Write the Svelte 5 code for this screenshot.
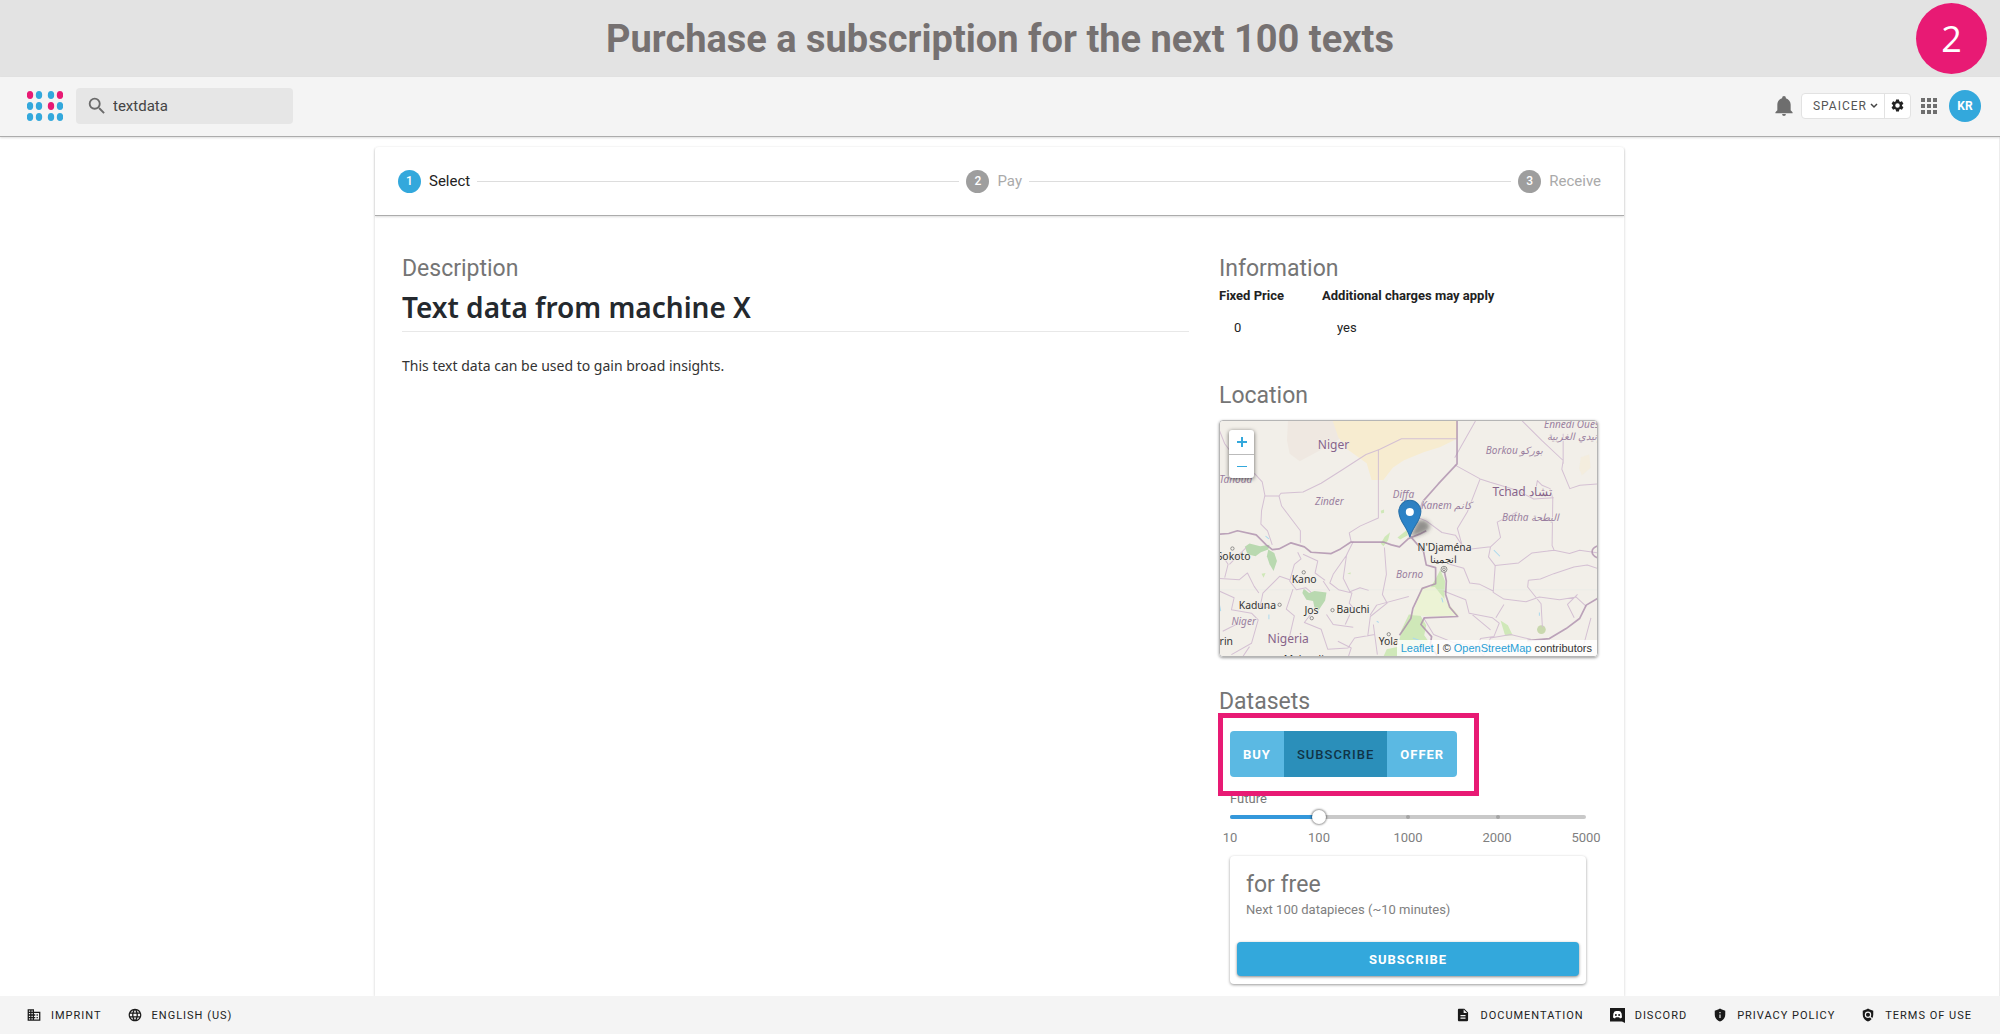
<script>
  const steps = [
    { n: 1, label: 'Select', active: true },
    { n: 2, label: 'Pay', active: false },
    { n: 3, label: 'Receive', active: false }
  ];
  const amounts = [10, 100, 1000, 2000, 5000];
  const modes = ['Buy', 'Subscribe', 'Offer'];
  let mode = $state('Subscribe');
  let level = $state(1);
  let query = $state('textdata');

  const dots = [
    [3, 4, 1], [12, 4, 0], [24, 4, 0], [33, 4, 1],
    [3, 15, 0], [12, 15, 0], [24, 15, 1], [33, 15, 0],
    [3, 26, 0], [12, 26, 0], [24, 26, 0], [33, 26, 0]
  ];
  const cells = [0, 6, 12];
</script>

<div class="page">
  <div class="banner">
    <h1>Purchase a subscription for the next 100 texts</h1>
    <span class="badge">2</span>
  </div>

  <header>
    <a class="logo" href="#home" aria-label="Home">
      <svg width="36" height="30" viewBox="0 0 36 30">
        {#each dots as [x, y, pink]}
          <ellipse cx={x} cy={y} rx="3.2" ry="4" class:pink={pink === 1} />
        {/each}
      </svg>
    </a>
    <label class="search">
      <svg width="22" height="22" viewBox="0 0 24 24"><path fill="#6b6b6b" d="M15.500 14h-.79l-.28-.27A6.471 6.471 0 0 0 16 9.500 6.500 6.500 0 1 0 9.500 16c1.610 0 3.090-.59 4.230-1.570l.27.28v.79l5 4.990L20.490 19l-4.990-5zm-6 0C7.010 14 5 11.990 5 9.500S7.010 5 9.500 5 14 7.010 14 9.500 11.990 14 9.500 14z" /></svg>
      <input type="text" aria-label="Search" bind:value={query} />
    </label>
    <div class="tools">
      <button class="plain" aria-label="Notifications">
        <svg width="18" height="20" viewBox="3 2 18 21"><path fill="#6e6e6e" d="M21,19V20H3V19L5,17V11C5,7.9 7.03,5.17 10,4.29V4A2,2 0 0,1 14,4V4.29C16.97,5.17 19,7.9 19,11V17L21,19M14,21A2,2 0 0,1 10,21" /></svg>
      </button>
      <div class="group">
        <button class="org">SPAICER
          <svg width="8" height="6" viewBox="0 0 8 6"><path d="M1 1l3 3 3-3" fill="none" stroke="#444" stroke-width="1.5" /></svg>
        </button>
        <button class="gear" aria-label="Settings">
          <svg width="15" height="15" viewBox="0 0 24 24"><path fill="#222" d="M19.14 12.94c.04-.3.06-.61.06-.94 0-.32-.02-.64-.07-.94l2.03-1.58c.18-.14.23-.41.12-.61l-1.92-3.32c-.12-.22-.37-.29-.59-.22l-2.39.96c-.5-.38-1.03-.7-1.62-.94l-.36-2.54c-.04-.24-.24-.41-.48-.41h-3.84c-.24 0-.43.17-.47.41l-.36 2.54c-.59.24-1.13.57-1.62.94l-2.39-.96c-.22-.08-.47 0-.59.22L2.74 8.87c-.12.21-.08.47.12.61l2.03 1.58c-.05.3-.09.63-.09.94s.02.64.07.94l-2.03 1.58c-.18.14-.23.41-.12.61l1.92 3.32c.12.22.37.29.59.22l2.39-.96c.5.38 1.03.7 1.62.94l.36 2.54c.05.24.24.41.48.41h3.84c.24 0 .44-.17.47-.41l.36-2.54c.59-.24 1.13-.56 1.62-.94l2.39.96c.22.08.47 0 .59-.22l1.92-3.32c.12-.22.07-.47-.12-.61l-2.01-1.58zM12 15.6a3.6 3.6 0 1 1 0-7.2a3.6 3.6 0 0 1 0 7.2z" /></svg>
        </button>
      </div>
      <button class="plain" aria-label="Apps">
        <svg width="16" height="16" viewBox="0 0 16 16" fill="#6e6e6e">
          {#each cells as y}{#each cells as x}<rect {x} {y} width="4" height="4" />{/each}{/each}
        </svg>
      </button>
      <button class="avatar">KR</button>
    </div>
  </header>

  <main>
    <section class="card">
      <ol class="stepper">
        {#each steps as s, i}
          {#if i > 0}<li class="line" aria-hidden="true"></li>{/if}
          <li class="step" class:active={s.active}><span class="num">{s.n}</span>{s.label}</li>
        {/each}
      </ol>

      <div class="columns">
        <article>
          <h2>Description</h2>
          <h3>Text data from machine X</h3>
          <p>This text data can be used to gain broad insights.</p>
        </article>

        <aside>
          <h2>Information</h2>
          <table>
            <thead><tr><th>Fixed Price</th><th>Additional charges may apply</th></tr></thead>
            <tbody><tr><td>0</td><td>yes</td></tr></tbody>
          </table>

          <h2>Location</h2>
          <div class="map">
            <svg class="tiles" viewBox="30 32 1130 702" preserveAspectRatio="xMidYMid slice" role="img" aria-label="Map around N'Djaména">
              <rect x="20" y="20" width="1160" height="730" fill="#f2efe9" />
              <path fill="#efe8e1" d="M235 30H372L390 85L330 120L270 152L240 130L232 90Z" />
              <path fill="#f7ecd0" d="M368 30H740V85L690 110L640 125L580 150L548 172L520 208H485L470 158L410 115L385 80Z" />
              <path fill="#f5ecd4" d="M1110 140l25-8 4 40-26 22-8-20z" opacity=".5" />
              <g fill="#b9d9b0">
                <path d="M106 408l14-10 32 8 28-4-4 14-22 8-16 12-24-6z" />
                <path d="M176 416l18 10 8 24-10 30-12-20-8-24z" />
                <path d="M282 532l16 14 16-6 36 4-4 24-20 30-12-10-4-18-20-4-12-20z" />
              </g>
              <g fill="#cfe8b8">
                <path d="M512 398l12-20 16-14-6 24-14 18zM562 380l30-24v18l-22 12z" />
                <path d="M512 300l10-4v10l-8 2zM156 488l12-2-6 14zM412 488l10-4v6zM870 628l22 14 14 30-22 2z" />
                <path d="M678 500l12-24 14 34-2 60-30-20-14-16z" />
                <path d="M520 736l10-22 34-8 10-50 22-46 34 2 18 30-6 30 14 20-20 20-30 4-40 20z" />
              </g>
              <path fill="#ecf3d5" d="M634 530l40-2 38 48 34 36-80 4-60-4z" />
              <circle cx="992" cy="655" r="13" fill="#c9d8ae" />
              <g fill="none" stroke="#abd9ee" stroke-width="3">
                <path d="M850 418l18 18M608 680l26 10M178 610v14M694 560l4 14M168 376l10 8M986 604v10M30 580l4 20M500 630l6 4" />
                <path d="M30 536H1160" stroke="#dfe6e6" stroke-width="1" />
              </g>
              <g fill="none" stroke="#d4c0d3" stroke-width="3" stroke-linejoin="round">
                <path d="M30 60l16 40 60 80 30 10 22 24 8 40-10 46-2 40 20 20 14 42" />
                <path d="M166 256h42l6-8 66-4 54-26 60-38 74-48 40-15 66-32h164" />
                <path d="M505 118V322L450 346l-32 20 6 28M208 256l8 30 56 74v36" />
                <path d="M733 163l76 42 30 10 80 24 50 26 60-4M809 205l-38 98-30 50 14 50-20-30-40-8-46-34-24-10M795 32l-62 110M933 30l60 60 64 60-4 26 24 58 30-10 54-4M1057 70v90" />
                <path d="M976 232l4-22 14 14 24 10 8 30-2 140 6 14-20 2M730 420l110-12 30-28-10-46 60-30M840 408l-6 30 20 26 70-8 40-30 66-8 46 10 30-10 54 8" />
                <path d="M854 464l-6 80 32 20 66 8 40-14 60 8 50-8 30 28M848 540l-40-20-30-4-18-44-50-14M953 508l36-4 40-16 60-20 40-6 30 10M953 508l-2 20 40 50 4 70M700 540l66 26 10 40 70 14 20 16-16 40-40 6-10 30M780 606l60 50M640 620l30 50 60 24 60 10 30 30M820 730l20-50 60-10 60 14M880 580l-24 40M1090 620l-20-40 30-30" />
                <path d="M523 410l6 80-12 60 14 26-50 40-8 60M480 612l20-30 96-26M430 392l-20 40-10 70 20 40 30-12 26 8M412 430l-42 60-10 26 26 20 40 10-8 30 20 24M264 424l10 20-20 16-14 50 20 26 28-6 16 14M280 430l44 20-8 36 30 22M240 506l-30-10-20 20-30 30-8 40 30 4M30 502l60 4 24-20 20 40 14 20M30 540l44 20-8 36 60 10 20 20-20 70-60 34M46 500l10-40-20-30M60 460l50-50M310 600l-26 34 50 20 20 60 60-4 20-30 60-10M350 610l20 30 60 8M340 510l20 30M250 534l-20 60 24 20-14 60M384 690l40 20-10 30M80 640l-40 20M100 736l20-30M420 610l-14 30M490 640l12 90M1140 620l-24 90" />
              </g>
              <g fill="none" stroke="#ad8eac" stroke-width="5" stroke-linejoin="round" opacity=".8">
                <path d="M740 30v130l-56 60-46 52-18 54-22 50" />
                <path d="M28 370l30-2 26-8 56 12 30 30 18 14 20-2 36-18 40 12 20 16 60 4 28-14 30-20h100l22 8 24 6 26-24 34-14 20-10" />
                <path d="M600 376l40 46 8 40 28 8v48l-40 14-28 60-6 30-20 30-14 20" />
                <path d="M700 470l8 40-2 40 12 38 24 28-100 4-10 20 32 36-4 24 20 32" />
                <path d="M1160 405c-22 8-22 26 0 36M1160 562l-34 20-20 40-40 30-50 30-66 6" />
              </g>
              <g class="region" font-size="30">
                <text x="30" y="216">Tahoua</text><text x="316" y="283">Zinder</text><text x="548" y="261">Diffa</text>
                <text x="632" y="294">Kanem كانم</text><text x="826" y="131">Borkou بوركو</text>
                <text x="1000" y="54">Ennedi Ouest</text><text x="1010" y="88">إنيدي الغربية</text>
                <text x="874" y="332">Batha البطحة</text><text x="558" y="501">Borno</text><text x="66" y="641">Niger</text>
              </g>
              <g class="country" font-size="36">
                <text x="324" y="116">Niger</text><text x="846" y="256">Tchad تشاد</text><text x="174" y="694">Nigeria</text>
              </g>
              <g class="city" font-size="31">
                <text x="22" y="448">Sokoto</text><text x="246" y="517">Kano</text><text x="88" y="593">Kaduna</text>
                <text x="284" y="610">Jos</text><text x="380" y="606">Bauchi</text><text x="506" y="700">Yola</text>
                <text x="622" y="420">N'Djaména</text><text x="660" y="457">انجمينا</text><text x="12" y="702">orin</text><text x="222" y="754">Makurdi</text>
              </g>
              <g fill="#f2efe9" stroke="#666" stroke-width="2">
                <circle cx="69" cy="413" r="5" /><circle cx="282" cy="484" r="5" /><circle cx="210" cy="581" r="5" />
                <circle cx="306" cy="621" r="5" /><circle cx="368" cy="597" r="5" /><circle cx="536" cy="669" r="5" />
                <circle cx="701" cy="475" r="9" /><circle cx="701" cy="475" r="4" />
              </g>
              <defs>
                <linearGradient id="pin" x1="0" y1="0" x2="0" y2="1"><stop offset="0" stop-color="#2e7fc0" /><stop offset="1" stop-color="#2a87cf" /></linearGradient>
                <filter id="soft" x="-50%" y="-50%" width="200%" height="200%"><feGaussianBlur stdDeviation="6" /></filter>
              </defs>
              <path fill="#333" opacity=".5" filter="url(#soft)" d="M600 378l20-44c14-14 42-2 38 16c-4 14-32 22-58 28z" />
              <path fill="url(#pin)" stroke="#2970a8" stroke-width="3" d="M599 379C592 350 566 330 566 302a33 33 0 0 1 66 0C632 330 606 350 599 379z" />
              <circle cx="599" cy="304" r="12" fill="#fff" />
            </svg>
            <div class="zoom">
              <button aria-label="Zoom in"><svg width="10" height="10" viewBox="0 0 10 10"><path d="M5 0v10M0 5h10" stroke="#33a8dc" stroke-width="2" /></svg></button>
              <button aria-label="Zoom out"><svg width="10" height="10" viewBox="0 0 10 10"><path d="M0 4.500h10" stroke="#33a8dc" stroke-width="1" /></svg></button>
            </div>
            <div class="credit"><a href="#leaflet">Leaflet</a> | © <a href="#osm">OpenStreetMap</a> contributors</div>
          </div>

          <h2>Datasets</h2>
          <div class="datasets">
            <div class="modes">
              {#each modes as m}
                <button class:selected={mode === m} aria-pressed={mode === m} onclick={() => (mode = m)}>{m}</button>
              {/each}
            </div>
            <div class="mark"></div>

            <label class="caption" for="amount">Future</label>
            <div class="slider">
              <div class="rail">
                <span class="fill" style="width: {level * 25}%"></span>
                <i></i><i></i><i></i>
              </div>
              <input id="amount" type="range" min="0" max="4" bind:value={level} />
            </div>
            <div class="labels">
              {#each amounts as a}<span>{a}</span>{/each}
            </div>

            <div class="offer">
              <div class="text">
                <h2>for free</h2>
                <p>Next 100 datapieces (~10 minutes)</p>
              </div>
              <button>Subscribe</button>
            </div>
          </div>
        </aside>
      </div>
    </section>
  </main>

  <footer>
    <a href="#imprint"><svg width="14" height="14" viewBox="1 1 22 22"><path d="M18,15H16V17H18M18,11H16V13H18M20,19H12V17H14V15H12V13H14V11H12V9H20M10,7H8V5H10M10,11H8V9H10M10,15H8V13H10M10,19H8V17H10M6,7H4V5H6M6,11H4V9H6M6,15H4V13H6M6,19H4V17H6M12,7V3H2V21H22V7H12Z" /></svg>Imprint</a>
    <a href="#language"><svg width="14" height="14" viewBox="1 1 22 22"><path d="M11.99 2C6.47 2 2 6.48 2 12s4.47 10 9.99 10C17.52 22 22 17.52 22 12S17.52 2 11.99 2zm6.93 6h-2.95c-.32-1.25-.78-2.45-1.38-3.56 1.84.63 3.37 1.91 4.33 3.56zM12 4.04c.83 1.2 1.48 2.53 1.91 3.96h-3.82c.43-1.43 1.08-2.76 1.91-3.96zM4.26 14C4.1 13.36 4 12.69 4 12s.1-1.36.26-2h3.38c-.08.66-.14 1.32-.14 2 0 .68.06 1.34.14 2H4.26zm.82 2h2.95c.32 1.25.78 2.45 1.38 3.56-1.84-.63-3.37-1.9-4.33-3.56zm2.95-8H5.08c.96-1.66 2.49-2.93 4.33-3.56C8.81 5.55 8.35 6.75 8.03 8zM12 19.96c-.83-1.2-1.48-2.53-1.91-3.96h3.82c-.43 1.43-1.08 2.76-1.91 3.96zM14.34 14H9.66c-.09-.66-.16-1.32-.16-2 0-.68.07-1.35.16-2h4.68c.09.65.16 1.32.16 2 0 .68-.07 1.34-.16 2zm.25 5.56c.6-1.11 1.06-2.31 1.38-3.56h2.95c-.96 1.65-2.49 2.93-4.33 3.56zM16.36 14c.08-.66.14-1.32.14-2 0-.68-.06-1.34-.14-2h3.38c.16.64.26 1.31.26 2s-.1 1.36-.26 2h-3.38z" /></svg>English (US)</a>
    <a class="first-right" href="#docs"><svg width="14" height="14" viewBox="1 1 22 22"><path d="M13,9H18.5L13,3.5V9M6,2H14L20,8V20A2,2 0 0,1 18,22H6C4.89,22 4,21.1 4,20V4C4,2.89 4.89,2 6,2M16,18V16H8V18H16M16,14V12H8V14H16Z" /></svg>Documentation</a>
    <a href="#discord"><svg width="15" height="15" viewBox="0 0 15 15"><path d="M0 0H15V15L12 13.500H0Z" /><path fill="#fff" d="M4.500 3.500L6.200 3h2.600l1.700.5 1.100 2 .4 4-2 1-.8-1.200H5.800L5 10.500l-2-1 .4-4z" /><circle cx="5.900" cy="7" r="1" /><circle cx="9.100" cy="7" r="1" /></svg>Discord</a>
    <a href="#privacy"><svg width="14" height="14" viewBox="0 0 24 24"><path d="M12 1C9 3 6 4 3 4.500V11c0 6 4 10.500 9 12c5-1.500 9-6 9-12V4.500C18 4 15 3 12 1z" /><path fill="#f4f4f4" d="M11 11h2v6h-2zM11 7h2v2h-2z" /></svg>Privacy policy</a>
    <a href="#terms"><svg width="14" height="14" viewBox="0 0 24 24"><path d="M12 1C9 3 6 4 3 4.500V11c0 6 4 10.500 9 12c5-1.500 9-6 9-12V4.500C18 4 15 3 12 1z" /><circle cx="12" cy="11.500" r="4.500" fill="none" stroke="#f4f4f4" stroke-width="2" /><path d="M15 14.500l6 6" stroke="#f4f4f4" stroke-width="2" /></svg>Terms of use</a>
  </footer>
</div>

<style>
  :global(body) { margin: 0; background: #fff; font-family: Roboto, "Liberation Sans", sans-serif; color: #222; }
  .page { min-height: 100vh; display: flex; flex-direction: column; }
  button { font: inherit; border: 0; padding: 0; cursor: pointer; }
  h1, h2, h3, p { margin: 0; }

  .banner { display: grid; grid-template-columns: 84px 1fr 84px; align-items: center; background: #e3e3e3; height: 77px; }
  .banner h1 { grid-column: 2; text-align: center; font-size: 38px; line-height: 44px; font-weight: 700; color: #767171; }
  .badge { width: 71px; height: 71px; border-radius: 50%; background: #e81a74; color: #fff; font: 36px/71px "Open Sans", sans-serif; text-align: center; }

  header { display: flex; align-items: center; box-sizing: border-box; height: 60px; padding: 0 19px 2px 27px; background: #f4f4f4; border-bottom: 1px solid #acacac; box-shadow: 0 1px 2px #0002; z-index: 1; }
  .logo { display: flex; margin-right: 13px; }
  .logo ellipse { fill: #33a8dc; }
  .logo ellipse.pink { fill: #e81a74; }
  .search { display: flex; align-items: center; box-sizing: border-box; width: 217px; height: 36px; padding: 0 10px; gap: 5px; border-radius: 4px; background: #e6e6e6; }
  .search svg { flex: none; }
  .search input { flex: 1; min-width: 0; border: 0; padding: 0; background: none; outline: 0; font: 15px Roboto, sans-serif; color: #444; }
  .tools { display: flex; align-items: center; margin-left: auto; }
  .plain { display: flex; background: none; }
  .group { display: flex; margin: 0 10px 0 8px; height: 24px; border: 1px solid #e2e2e2; border-radius: 4px; background: #fff; }
  .group button { display: flex; align-items: center; justify-content: center; background: none; }
  .group .org { width: 83px; gap: 3px; padding-left: 5px; font-size: 12px; letter-spacing: 1px; color: #555; border-right: 1px solid #e2e2e2; }
  .gear { width: 25px; }
  .avatar { width: 32px; height: 32px; margin-left: 12px; border-radius: 50%; background: #33a8dc; color: #fff; font-size: 12px; font-weight: 700; }

  main { flex: 1; display: flex; border-right: 1px solid #ececec; }
  .card { width: min(1249px, 100%); margin: 10px auto 0; border-radius: 4px 4px 0 0; background: #fff; box-shadow: 0 1px 3px #0003; }
  .stepper { display: flex; align-items: center; gap: 7px; height: 68px; margin: 0; padding: 0 23px; list-style: none; border-bottom: 1px solid #acacac; box-shadow: 0 1px 2px #0002; }
  .step { display: flex; align-items: center; gap: 8px; font-size: 15px; color: #aaa; }
  .step.active { color: #222; }
  .num { width: 23px; height: 23px; border-radius: 50%; background: #9e9e9e; color: #fff; text-align: center; font-size: 12px; line-height: 23px; font-weight: 500; }
  .active .num { background: #33a8dc; }
  .line { flex: 1; height: 1px; background: #ddd; }

  .columns { display: grid; grid-template-columns: 1fr 379px; gap: 30px; padding: 37px 26px 12px 27px; }
  h2 { font-size: 23px; line-height: 32px; font-weight: 400; color: #757575; }
  h3 { padding: 6px 0 8px; border-bottom: 1px solid #e8e8e8; font: 600 28px/32px "Noto Sans", "Open Sans", sans-serif; color: #24292e; }
  article p { margin-top: 24px; font: 14px/20px "Noto Sans", sans-serif; color: #333; }

  table { border-collapse: collapse; margin-bottom: 42px; font-size: 13px; line-height: 20px; text-align: left; }
  th { padding: 1px 38px 0 0; font-weight: 700; }
  td { padding: 12px 15px 0; }

  .map { position: relative; box-sizing: border-box; height: 237px; margin: 8px 0 29px; border: 1px solid #b5b5b5; border-radius: 4px; overflow: hidden; box-shadow: 0 1px 3px #0006; }
  .tiles { display: block; width: 100%; height: 100%; font-family: "Noto Sans", sans-serif; }
  .tiles text { paint-order: stroke; stroke: #f2efe9; stroke-width: 3px; }
  .region { fill: #9a7fa0; font-style: italic; }
  .country { fill: #87648a; }
  .city { fill: #333; }
  .zoom { position: absolute; top: 9px; left: 9px; width: 25px; border-radius: 3px; background: #fff; box-shadow: 0 1px 4px #0009; }
  .zoom button { display: flex; width: 100%; height: 24px; align-items: center; justify-content: center; background: none; }
  .zoom button + button { border-top: 1px solid #bbb; }
  .credit { position: absolute; right: 0; bottom: 0; padding: 0 5px 0 4px; background: #fffc; font: 11px/16px "Liberation Sans", sans-serif; color: #333; }
  .credit a { color: #2a9fd6; text-decoration: none; }

  .datasets { position: relative; padding: 13px 12px 0 11px; }
  .mark { position: absolute; top: -5px; left: -1px; width: 251px; height: 73px; border: 5px solid #e81a74; }
  .modes { display: flex; width: fit-content; border-radius: 4px; overflow: hidden; background: #5bb9e3; }
  .modes button { height: 46px; padding: 0 13px; background: none; color: #fff; font-size: 13px; font-weight: 700; letter-spacing: 1px; text-transform: uppercase; }
  .modes .selected { background: #2b8fba; color: #103447; font-weight: 500; }
  .caption { display: block; margin-top: 12px; font-size: 13px; line-height: 20px; color: #777; }
  .slider { display: grid; align-items: center; height: 16px; }
  .slider > * { grid-area: 1 / 1; }
  .rail { position: relative; display: flex; align-items: center; justify-content: space-evenly; height: 4px; border-radius: 2px; background: #c9c9c9; }
  .rail i { width: 4px; height: 4px; border-radius: 2px; background: #a5a5a5; }
  .fill { position: absolute; left: 0; top: 0; height: 4px; border-radius: 2px; background: #3498db; }
  .slider input { position: relative; appearance: none; width: calc(100% + 14px); height: 14px; margin: 0 -7px; background: none; }
  .slider input::-webkit-slider-thumb { appearance: none; width: 14px; height: 14px; border-radius: 50%; background: #fff; box-shadow: 0 0 2px 1px #0006; }
  .labels { display: flex; justify-content: space-between; margin: 3px -20px 0; font-size: 13px; line-height: 20px; color: #808080; }
  .labels span { width: 40px; text-align: center; }
  .offer { margin-top: 8px; padding: 14px 7px 8px; border-radius: 4px; box-shadow: 0 1px 3px #0006; }
  .offer .text { padding: 0 9px; }
  .offer h2 { line-height: 30px; }
  .offer p { font-size: 13px; line-height: 20px; color: #808080; }
  .offer button { display: block; width: 100%; height: 34px; margin-top: 22px; border-radius: 4px; background: #33a8dc; color: #fff; font-size: 13px; font-weight: 700; letter-spacing: 1px; text-transform: uppercase; box-shadow: 0 1px 3px #0007; }

  footer { display: flex; align-items: center; gap: 26px; height: 38px; padding: 0 28px 0 27px; background: #f4f4f4; border-bottom: 1px solid #d8d8dc; }
  footer a { display: flex; align-items: center; gap: 10px; color: #222; fill: #1a1a1a; font-size: 11px; letter-spacing: 1px; text-transform: uppercase; text-decoration: none; }
  .first-right { margin-left: auto; }
</style>
